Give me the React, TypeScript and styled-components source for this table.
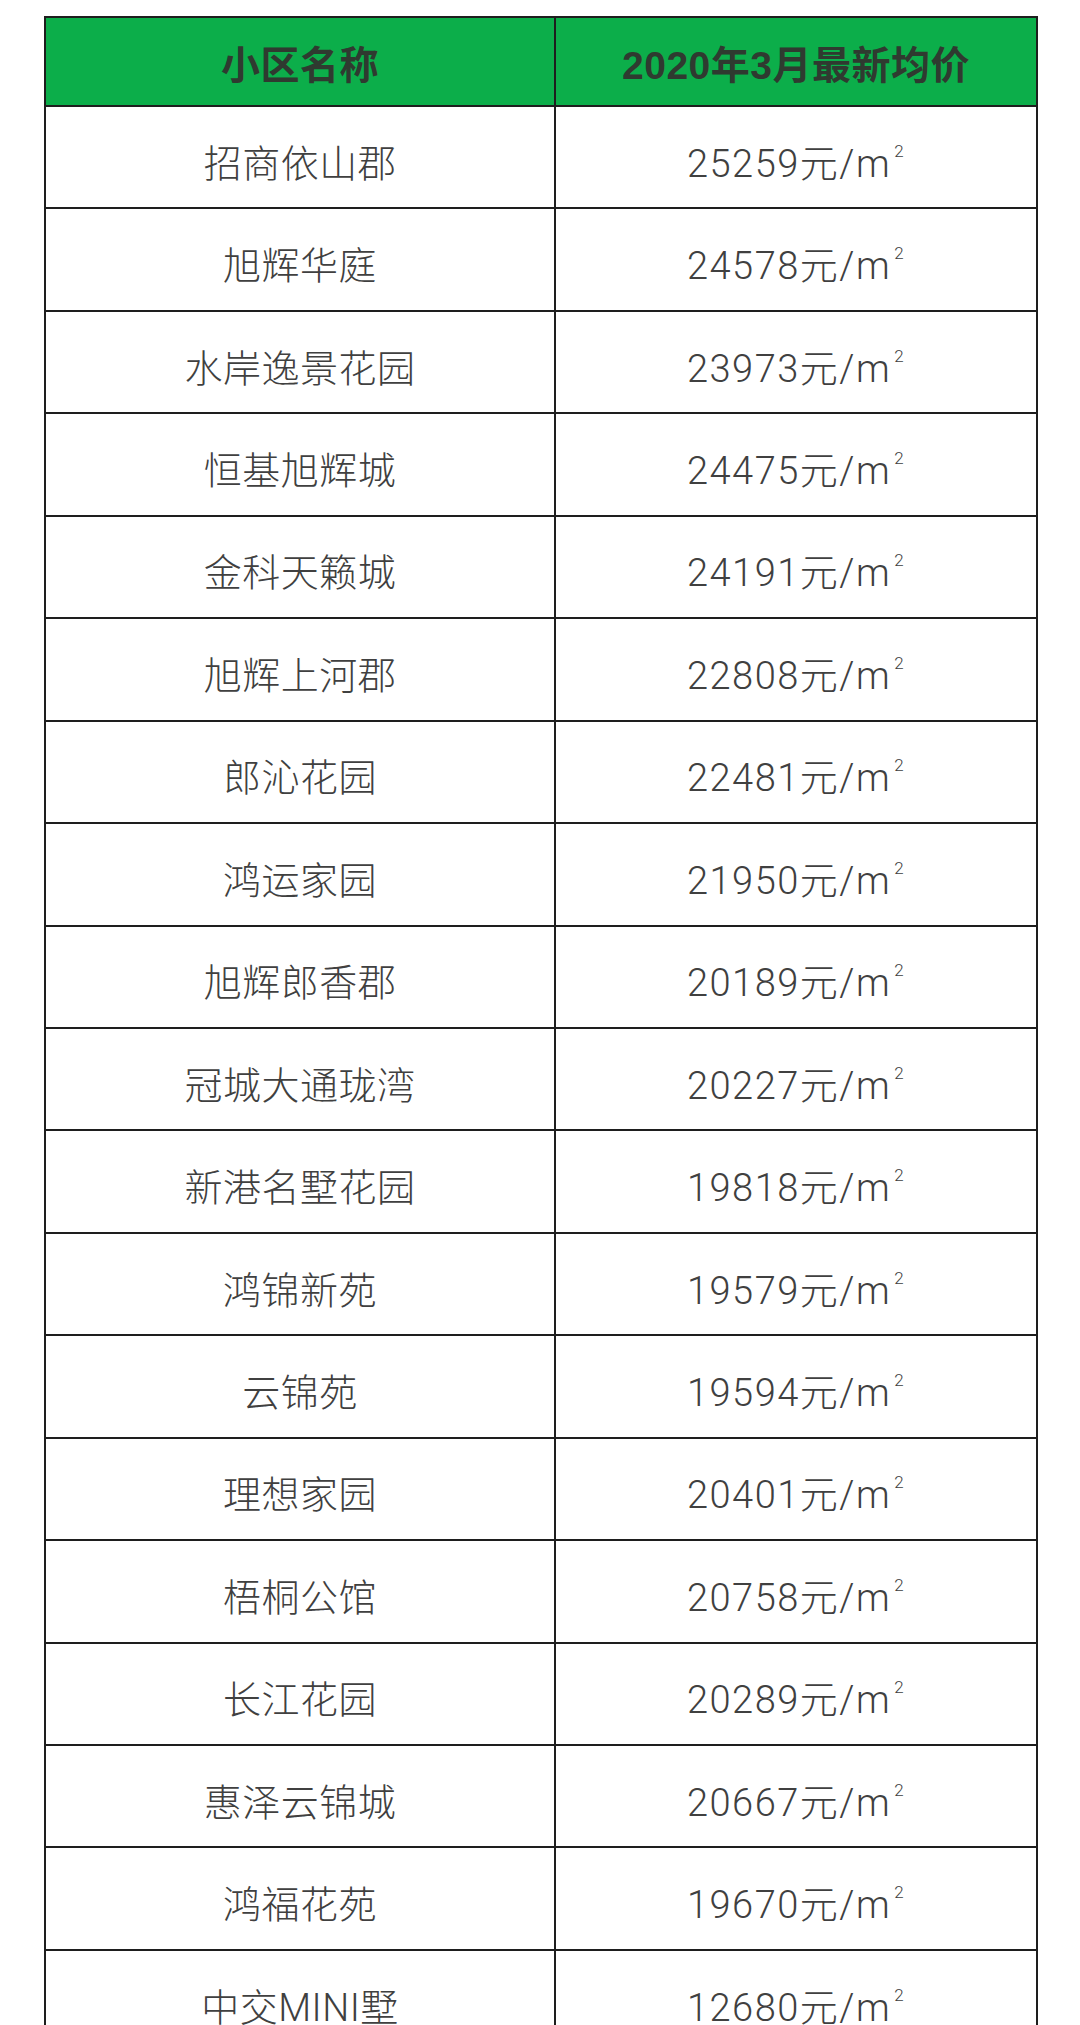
import { createGlobalStyle, styled } from "styled-components";

const GlobalStyle = createGlobalStyle`
  html, body {
    margin: 0;
    padding: 0;
    background: #ffffff;
  }
  body {
    font-family: "Liberation Sans", "Noto Sans CJK SC", sans-serif;
  }
`;

const rows = [
  { name: "招商依山郡", price: "25259" },
  { name: "旭辉华庭", price: "24578" },
  { name: "水岸逸景花园", price: "23973" },
  { name: "恒基旭辉城", price: "24475" },
  { name: "金科天籁城", price: "24191" },
  { name: "旭辉上河郡", price: "22808" },
  { name: "郎沁花园", price: "22481" },
  { name: "鸿运家园", price: "21950" },
  { name: "旭辉郎香郡", price: "20189" },
  { name: "冠城大通珑湾", price: "20227" },
  { name: "新港名墅花园", price: "19818" },
  { name: "鸿锦新苑", price: "19579" },
  { name: "云锦苑", price: "19594" },
  { name: "理想家园", price: "20401" },
  { name: "梧桐公馆", price: "20758" },
  { name: "长江花园", price: "20289" },
  { name: "惠泽云锦城", price: "20667" },
  { name: "鸿福花苑", price: "19670" },
  { name: "中交MINI墅", price: "12680" },
];

const App = () => {
  return (
    <>
      <GlobalStyle />
      <Page>
        <Table>
          <colgroup>
            <col style={{ width: 510 }} />
            <col style={{ width: 482 }} />
          </colgroup>
          <thead>
            <HeadRow>
              <HeadCell>小区名称</HeadCell>
              <HeadCell>2020年3月最新均价</HeadCell>
            </HeadRow>
          </thead>
          <tbody>
            {rows.map((item) => (
              <Row key={item.name}>
                <NameCell>{item.name}</NameCell>
                <PriceCell>
                  {item.price}元/m<Sup>2</Sup>
                </PriceCell>
              </Row>
            ))}
          </tbody>
        </Table>
      </Page>
    </>
  );
};

export default App;

const Page = styled.div`
  height: 2025px;
  overflow: hidden;
  padding: 16px 0 0 44px;
  box-sizing: border-box;
`;

const Table = styled.table`
  width: 992px;
  table-layout: fixed;
  border-collapse: collapse;
  border: 2px solid #1e1e1e;
`;

const HeadRow = styled.tr`
  height: 89px;
  background-color: #0cae4a;
`;

const HeadCell = styled.th`
  border: 2px solid #1e1e1e;
  padding: 0;
  text-align: center;
  vertical-align: middle;
  font-size: 39px;
  font-weight: 700;
  color: #2f3a30;
  letter-spacing: 0.5px;
`;

const Row = styled.tr`
  height: 102.45px;
`;

const NameCell = styled.td`
  border: 2px solid #1e1e1e;
  padding: 6px 0 0;
  text-align: center;
  vertical-align: middle;
  font-family: "Roboto", "Noto Sans CJK SC", sans-serif;
  font-size: 38px;
  font-weight: 300;
  color: #404040;
  letter-spacing: 0.5px;
`;

const PriceCell = styled(NameCell)`
  letter-spacing: 1.5px;
`;

const Sup = styled.sup`
  font-size: 17px;
  vertical-align: top;
  position: relative;
  top: 8px;
  margin-left: 3px;
`;
